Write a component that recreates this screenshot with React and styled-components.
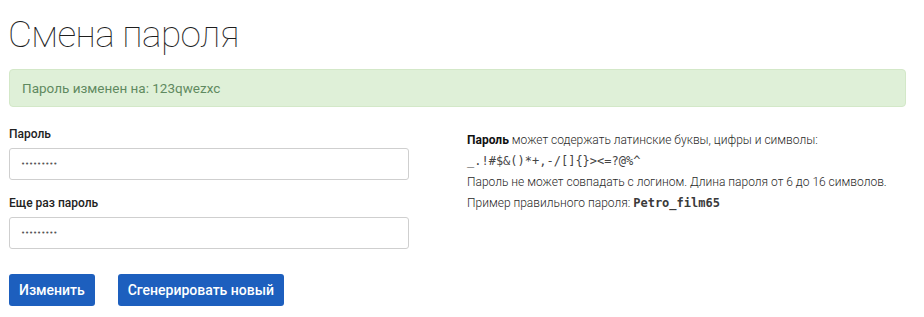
import React from "react";
import styled, { createGlobalStyle } from "styled-components";

const Global = createGlobalStyle`
  html, body { margin: 0; padding: 0; background: #fff; }
  body { font-family: Roboto, "Noto Sans", sans-serif; color: #333; }
  * { box-sizing: border-box; }
`;

const Page = styled.div`
  padding: 12px 18px 0 9px;
  width: 924px;
`;

const Title = styled.h1`
  margin: 0 0 0 -1px;
  font-size: 37px;
  font-weight: 100;
  line-height: 46px;
  letter-spacing: -0.6px;
  color: #1e1e1e;
`;

const Alert = styled.div`
  margin-top: 11px;
  height: 38px;
  display: flex;
  align-items: center;
  padding: 0 12px;
  background: #dff0d8;
  border: 1px solid #d3e8c8;
  border-radius: 4px;
  color: #5f8a60;
  font-size: 13.5px;
  font-weight: 400;
`;

const Columns = styled.div`
  display: grid;
  grid-template-columns: 458px 1fr;
  margin-top: 19px;
`;

const Form = styled.div`
  display: flex;
  flex-direction: column;
  width: 400px;
`;

const Field = styled.div`
  display: flex;
  flex-direction: column;
  margin-bottom: 15px;
`;

const Label = styled.label`
  font-size: 12px;
  font-weight: 500;
  color: #222;
  line-height: 16px;
  margin-bottom: 6px;
`;

const Input = styled.div`
  height: 32px;
  border: 1px solid #cfcfcf;
  border-radius: 3px;
  display: flex;
  align-items: center;
  padding-left: 11px;
  padding-bottom: 1px;
  font-family: "DejaVu Sans", sans-serif;
  font-size: 7px;
  letter-spacing: -0.1px;
  color: #555;
`;

const Buttons = styled.div`
  display: flex;
  gap: 23px;
  margin-top: 10px;
`;

const Button = styled.button`
  height: 32px;
  padding: 0 ${(p) => p.$px}px;
  background: #1d5fbe;
  color: #fff;
  border: none;
  border-radius: 3px;
  font-family: Roboto, sans-serif;
  font-weight: 500;
  font-size: 14px;
  cursor: pointer;
`;

const Help = styled.div`
  font-size: 12px;
  font-weight: 300;
  color: #2a2a2a;
  line-height: 21px;
  padding-top: 4px;
`;

const Line = styled.div``;

const Strong = styled.b`
  font-weight: 700;
  color: #111;
`;

const Mono = styled.span`
  font-family: "DejaVu Sans Mono", monospace;
  font-size: 12px;
  font-weight: ${(p) => (p.$bold ? 700 : 400)};
  color: ${(p) => (p.$bold ? "#3a3a3a" : "#444")};
`;

export default function App() {
  return (
    <>
      <Global />
      <Page>
        <Title>Смена пароля</Title>
        <Alert>Пароль изменен на: 123qwezxc</Alert>
        <Columns>
          <Form>
            <Field>
              <Label>Пароль</Label>
              <Input>•••••••••</Input>
            </Field>
            <Field>
              <Label>Еще раз пароль</Label>
              <Input>•••••••••</Input>
            </Field>
            <Buttons>
              <Button $px={10}>Изменить</Button>
              <Button $px={10}>Сгенерировать новый</Button>
            </Buttons>
          </Form>
          <Help>
            <Line>
              <Strong>Пароль</Strong> может содержать латинские буквы, цифры и символы:
            </Line>
            <Line>
              <Mono>_.!#$&amp;()*+,-/[]{"{}"}&gt;&lt;=?@%^</Mono>
            </Line>
            <Line>Пароль не может совпадать с логином. Длина пароля от 6 до 16 символов.</Line>
            <Line>
              Пример правильного пароля: <Mono $bold>Petro_film65</Mono>
            </Line>
          </Help>
        </Columns>
      </Page>
    </>
  );
}
